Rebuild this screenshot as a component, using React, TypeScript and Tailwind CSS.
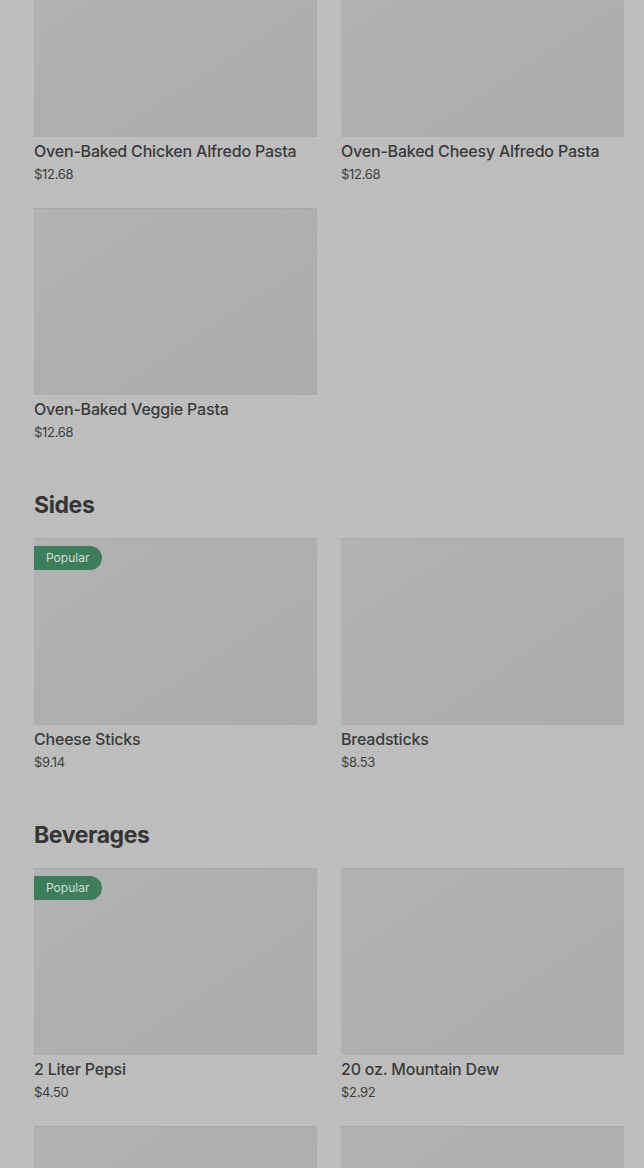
import React from "react";

type Item = { name?: string; price?: string; popular?: boolean };

const sections: { title?: string; items: Item[] }[] = [
  {
    items: [
      { name: "Oven-Baked Chicken Alfredo Pasta", price: "$12.68" },
      { name: "Oven-Baked Cheesy Alfredo Pasta", price: "$12.68" },
      { name: "Oven-Baked Veggie Pasta", price: "$12.68" },
    ],
  },
  {
    title: "Sides",
    items: [
      { name: "Cheese Sticks", price: "$9.14", popular: true },
      { name: "Breadsticks", price: "$8.53" },
    ],
  },
  {
    title: "Beverages",
    items: [
      { name: "2 Liter Pepsi", price: "$4.50", popular: true },
      { name: "20 oz. Mountain Dew", price: "$2.92" },
      {},
      {},
    ],
  },
];

function Card({ item }: { item: Item }) {
  return (
    <div className="flex flex-col">
      <div className="relative h-[187px] bg-gradient-to-br from-[#b2b2b2] to-[#acacac] border-t border-[#a8a8a8]">
        {item.popular && (
          <span className="absolute left-0 top-[7px] h-[24px] w-[68px] flex items-center pl-[12px] rounded-r-full bg-[#3e7d5b] text-[12px] text-[#d4ddd8]">
            Popular
          </span>
        )}
      </div>
      {item.name && (
        <>
          <div className="mt-[4px] text-[16px] leading-[20px] font-medium text-[#3a3a3a] tracking-[-0.2px]">
            {item.name}
          </div>
          <div className="mt-[4px] text-[13px] leading-[18px] text-[#3f3f3f] tracking-[-0.3px]">
            {item.price}
          </div>
        </>
      )}
    </div>
  );
}

export default function App() {
  return (
    <div
      className="h-[1168px] overflow-hidden bg-[#bdbdbd]"
      style={{ fontFamily: "Inter, 'Noto Sans', sans-serif" }}
    >
      <div className="-mt-[50px] pl-[34px] pr-[20px] flex flex-col">
        {sections.map((s, i) => (
          <div key={i} className={i > 0 ? "mt-[48px]" : ""}>
            {s.title && (
              <h2 className="h-[32px] mb-[17px] text-[23px] leading-[33px] font-bold text-[#353535] tracking-[-0.4px]">
                {s.title}
              </h2>
            )}
            <div className="grid grid-cols-2 gap-x-[24px] gap-y-[25px]">
              {s.items.map((it, j) => (
                <Card key={j} item={it} />
              ))}
            </div>
          </div>
        ))}
      </div>
    </div>
  );
}
